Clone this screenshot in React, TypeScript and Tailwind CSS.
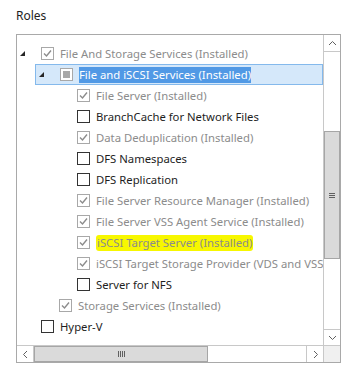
type Row = {
  label: string
  level: 0 | 1 | 2
  state: 'checked' | 'unchecked' | 'partial'
  installed?: boolean
  expander?: boolean
  selected?: boolean
  marked?: boolean
}

const rows: Row[] = [
  { label: 'File And Storage Services (Installed)', level: 0, state: 'checked', installed: true, expander: true },
  { label: 'File and iSCSI Services (Installed)', level: 1, state: 'partial', expander: true, selected: true },
  { label: 'File Server (Installed)', level: 2, state: 'checked', installed: true },
  { label: 'BranchCache for Network Files', level: 2, state: 'unchecked' },
  { label: 'Data Deduplication (Installed)', level: 2, state: 'checked', installed: true },
  { label: 'DFS Namespaces', level: 2, state: 'unchecked' },
  { label: 'DFS Replication', level: 2, state: 'unchecked' },
  { label: 'File Server Resource Manager (Installed)', level: 2, state: 'checked', installed: true },
  { label: 'File Server VSS Agent Service (Installed)', level: 2, state: 'checked', installed: true },
  { label: 'iSCSI Target Server (Installed)', level: 2, state: 'checked', installed: true, marked: true },
  { label: 'iSCSI Target Storage Provider (VDS and VSS hardware providers) (Installed)', level: 2, state: 'checked', installed: true },
  { label: 'Server for NFS', level: 2, state: 'unchecked' },
  { label: 'Storage Services (Installed)', level: 1, state: 'checked', installed: true },
  { label: 'Hyper-V', level: 0, state: 'unchecked' },
]

const indent = ['pl-0', 'pl-[18px]', 'pl-[36px]']

function Checkbox({ state, installed }: { state: Row['state']; installed?: boolean }) {
  const border = installed || state === 'partial' ? 'border-[#a8a8a8]' : 'border-[#333333]'
  return (
    <span className={`flex h-[13px] w-[13px] shrink-0 items-center justify-center border bg-white ${border}`}>
      {state === 'checked' && (
        <svg width="11" height="11" viewBox="0 0 11 11">
          <path d="M2 5.5 L4.5 8 L9 2.5" fill="none" stroke="#8c8c8c" strokeWidth="1.4" />
        </svg>
      )}
      {state === 'partial' && <span className="h-[7px] w-[7px] bg-[#a8a8a8]" />}
    </span>
  )
}

function Chevron({ d }: { d: string }) {
  return (
    <svg width="9" height="9" viewBox="0 0 9 9">
      <path d={d} fill="none" stroke="#606060" strokeWidth="1" />
    </svg>
  )
}

export default function App() {
  return (
    <div className="h-[378px] w-[363px] bg-white font-['Segoe_UI','Noto_Sans',sans-serif] text-[11.3px] text-[#1e1e1e]">
      <div className="px-[16px] pt-[7px] text-[12px] leading-[18px]">Roles</div>

      <div className="ml-[16px] mt-[9px] grid h-[329px] w-[325px] grid-cols-[1fr_17px] grid-rows-[1fr_17px] border border-[#a9a9a9]">
        {/* tree */}
        <div className="overflow-hidden pt-[8px]">
          {rows.map((r) => (
            <div key={r.label} className={`h-[21px] whitespace-nowrap ${indent[r.level]}`}>
              <div
                className={`flex h-[21px] items-center pl-[2px] ${
                  r.selected ? 'border border-[#84b9ec] bg-[#d5e8fa]' : ''
                }`}
              >
                <span className="flex w-[22px] shrink-0 items-center pl-[1px]">
                  {r.expander && (
                    <svg width="5" height="5" viewBox="0 0 5 5">
                      <polygon points="5,0 5,5 0,5" fill="#262626" />
                    </svg>
                  )}
                </span>
                <Checkbox state={r.state} installed={r.installed} />
                <span
                  className={`ml-[6px] leading-[16px] ${
                    r.selected
                      ? 'bg-[#5199e5] text-white'
                      : r.marked
                        ? 'rounded-[3px] bg-[#f7f700] px-[1px] text-[#8c8c8c]'
                        : r.installed
                          ? 'text-[#8c8c8c]'
                          : 'text-[#1e1e1e]'
                  }`}
                >
                  {r.label}
                </span>
              </div>
            </div>
          ))}
        </div>

        {/* vertical scrollbar */}
        <div className="flex flex-col border-l border-[#c8c8c8] bg-white">
          <div className="flex h-[17px] items-center justify-center border-b border-[#c8c8c8]">
            <Chevron d="M1 6 L4.5 2.5 L8 6" />
          </div>
          <div className="flex-1">
            <div className="mt-[79px] flex h-[128px] items-center justify-center border border-[#a6a6a6] bg-[#dadada]">
              <div className="flex flex-col gap-[1px]">
                <span className="h-[1px] w-[6px] bg-[#606060]" />
                <span className="h-[1px] w-[6px] bg-[#606060]" />
                <span className="h-[1px] w-[6px] bg-[#606060]" />
              </div>
            </div>
          </div>
          <div className="flex h-[16px] items-center justify-center border-t border-[#c8c8c8]">
            <Chevron d="M1 3 L4.5 6.5 L8 3" />
          </div>
        </div>

        {/* horizontal scrollbar */}
        <div className="flex border-t border-[#c8c8c8] bg-white">
          <div className="flex w-[17px] items-center justify-center border-r border-[#c8c8c8]">
            <Chevron d="M6 1 L2.5 4.5 L6 8" />
          </div>
          <div className="flex-1">
            <div className="flex h-full w-[174px] items-center justify-center border border-[#a6a6a6] bg-[#dadada]">
              <div className="flex gap-[1px]">
                <span className="h-[6px] w-[1px] bg-[#606060]" />
                <span className="h-[6px] w-[1px] bg-[#606060]" />
                <span className="h-[6px] w-[1px] bg-[#606060]" />
                <span className="h-[6px] w-[1px] bg-[#606060]" />
              </div>
            </div>
          </div>
          <div className="flex w-[17px] items-center justify-center border-l border-[#c8c8c8]">
            <Chevron d="M3 1 L6.5 4.5 L3 8" />
          </div>
        </div>
        <div className="border-l border-t border-[#c8c8c8] bg-[#f0f0f0]" />
      </div>
    </div>
  )
}
